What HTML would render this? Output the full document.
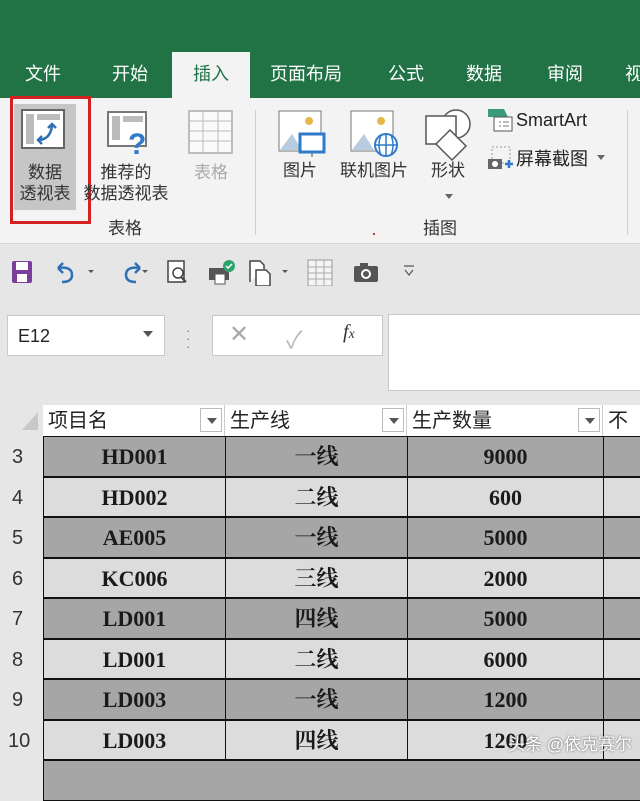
<!DOCTYPE html>
<html><head><meta charset="utf-8"><style>
*{margin:0;padding:0;box-sizing:border-box}
body{width:640px;height:765px;overflow:hidden;background:#e6e6e6;font-family:"Liberation Sans","Noto Sans CJK SC",sans-serif;position:relative;color:#222}
.abs{position:absolute}
.green{left:0;top:0;width:640px;height:98px;background:#217346}
.tab{top:60px;color:#fff;font-size:18px}
.act{left:172px;top:52px;width:78px;height:48px;background:#f3f3f3;color:#217346;font-size:18px;text-align:center;padding-top:8px}
.ribbon{left:0;top:98px;width:640px;height:146px;background:#f3f3f3;border-bottom:1px solid #d6d6d6}
.lbl{font-size:17px;color:#333;text-align:center;line-height:21px}
.sep{width:1px;background:#cfcfcf;top:110px;height:125px}
.box{background:#fff;border:1px solid #c9c9c9}
.hdr{top:405px;height:31px;background:#fff;border-right:1px solid #ccc;font-size:20px;padding-left:5px;line-height:33px}
.dd{position:absolute;right:2px;top:3px;width:22px;height:24px;border:1px solid #bbb;background:#fff}
.dd:after{content:"";position:absolute;left:6px;top:9px;border-left:5px solid transparent;border-right:5px solid transparent;border-top:6px solid #555}
.row{left:43px;width:597px;height:40.5px}
.c{position:absolute;top:0;height:100%;border:1.5px solid #111;font-family:"Liberation Serif","Noto Serif CJK SC",serif;font-weight:bold;font-size:22px;text-align:center;line-height:40px;color:#1a1a1a}
.rn{left:0;width:43px;font-size:20px;color:#333;padding-left:12px}
</style></head><body>
<div class="abs green"></div>
<div class="abs tab" style="left:25px">文件</div>
<div class="abs tab" style="left:112px">开始</div>
<div class="abs act">插入</div>
<div class="abs tab" style="left:270px">页面布局</div>
<div class="abs tab" style="left:388px">公式</div>
<div class="abs tab" style="left:466px">数据</div>
<div class="abs tab" style="left:547px">审阅</div>
<div class="abs tab" style="left:625px">视</div>
<div class="abs ribbon"></div>
<div class="abs" style="left:14px;top:104px;width:62px;height:106px;background:#c6c6c6"></div>
<div class="abs" style="left:10px;top:96px;width:81px;height:128px;border:3px solid #d42020"></div>
<svg class="abs" style="left:20px;top:108px" width="46" height="42"><rect x="2" y="2" width="42" height="38" fill="#fff" stroke="#666" stroke-width="2"/><rect x="6" y="6" width="8" height="30" fill="#bbb"/><rect x="17" y="6" width="23" height="6" fill="#bbb"/><path d="M18 32 Q30 32 32 18 M28 20 l4-4 4 4 M22 28 l-4 4 4 4" stroke="#2f6fb5" stroke-width="2.5" fill="none"/></svg>
<div class="abs lbl" style="left:12px;top:162px;width:66px">数据<br>透视表</div>
<svg class="abs" style="left:106px;top:110px" width="46" height="48"><rect x="2" y="2" width="38" height="34" fill="#fff" stroke="#777" stroke-width="2"/><rect x="6" y="6" width="8" height="24" fill="#bbb"/><rect x="17" y="6" width="20" height="6" fill="#bbb"/><text x="22" y="44" font-size="30" font-weight="bold" fill="#2f7ac9" font-family="Liberation Sans">?</text></svg>
<div class="abs lbl" style="left:78px;top:162px;width:96px">推荐的<br>数据透视表</div>
<svg class="abs" style="left:188px;top:110px" width="46" height="44"><rect x="1" y="1" width="43" height="42" fill="#fafafa" stroke="#aaa" stroke-width="1.5"/><path d="M1 11H44M1 21H44M1 31H44M15 1V43M30 1V43" stroke="#bbb"/></svg>
<div class="abs lbl" style="left:182px;top:162px;width:58px;color:#aaa">表格</div>
<div class="abs lbl" style="left:95px;top:218px;width:60px">表格</div>
<div class="abs sep" style="left:255px"></div>
<div class="abs sep" style="left:627px"></div>
<svg class="abs" style="left:278px;top:110px" width="50" height="48"><rect x="1" y="1" width="42" height="40" fill="#fff" stroke="#777"/><circle cx="31" cy="11" r="4" fill="#e6b84a"/><path d="M2 40 L14 24 L24 40Z" fill="#b9cde0"/><rect x="22" y="24" width="24" height="18" fill="#fff" stroke="#2f7ac9" stroke-width="3"/><path d="M34 43v4" stroke="#555"/></svg>
<div class="abs lbl" style="left:278px;top:160px;width:44px">图片</div>
<svg class="abs" style="left:350px;top:110px" width="50" height="48"><rect x="1" y="1" width="42" height="40" fill="#fff" stroke="#777"/><circle cx="31" cy="11" r="4" fill="#e6b84a"/><path d="M2 40 L14 24 L24 40Z" fill="#b9cde0"/><circle cx="36" cy="35" r="11" fill="#fff" stroke="#2f7ac9" stroke-width="2"/><path d="M25 35H47M36 24V46M31 25Q27 35 31 45M41 25Q45 35 41 45" stroke="#2f7ac9" stroke-width="1.5" fill="none"/></svg>
<div class="abs lbl" style="left:334px;top:160px;width:80px">联机图片</div>
<svg class="abs" style="left:424px;top:108px" width="48" height="54"><circle cx="32" cy="16" r="14" fill="#fff" stroke="#555" stroke-width="1.5"/><rect x="2" y="8" width="30" height="28" fill="#fff" stroke="#555" stroke-width="1.5"/><path d="M26 22L42 38 28 52 12 36Z" fill="#fff" stroke="#555" stroke-width="1.5"/></svg>
<div class="abs lbl" style="left:426px;top:160px;width:44px">形状</div>
<div class="abs" style="left:445px;top:194px;border-left:4px solid transparent;border-right:4px solid transparent;border-top:5px solid #666"></div>
<svg class="abs" style="left:486px;top:107px" width="28" height="26"><path d="M2 2H18L22 10H2Z" fill="#3b9a7a"/><rect x="8" y="10" width="18" height="14" fill="#fff" stroke="#555"/><path d="M13 15h2M13 19h2M17 15h6M17 19h6" stroke="#777"/></svg>
<div class="abs" style="left:516px;top:110px;font-size:18px;color:#222">SmartArt</div>
<svg class="abs" style="left:486px;top:145px" width="28" height="26"><rect x="6" y="2" width="18" height="16" fill="none" stroke="#999" stroke-dasharray="2 2"/><rect x="2" y="14" width="14" height="10" fill="#666"/><circle cx="9" cy="19" r="3" fill="#fff"/><path d="M19 19h8M23 15v8" stroke="#2f7ac9" stroke-width="2.5"/></svg>
<div class="abs" style="left:516px;top:145px;font-size:18px;color:#222">屏幕截图</div>
<div class="abs" style="left:597px;top:155px;border-left:4px solid transparent;border-right:4px solid transparent;border-top:5px solid #666"></div>
<div class="abs lbl" style="left:410px;top:218px;width:60px">插图</div>
<div class="abs" style="left:373px;top:233px;width:2px;height:2px;background:#d33"></div>
<!-- quick access -->
<svg class="abs" style="left:10px;top:258px" width="420" height="28">
<rect x="2" y="3" width="20" height="22" rx="2" fill="#7a3e9d"/><rect x="6" y="4" width="12" height="8" fill="#fff"/><rect x="7" y="16" width="10" height="8" fill="#fff"/>
<path d="M48 10 Q62 8 62 17 Q62 24 52 24 M48 10 l5-5 M48 10 l5 5" stroke="#2f6fb5" stroke-width="2.5" fill="none"/><path d="M78 12l3 3 3-3Z" fill="#555"/>
<path d="M130 10 Q116 8 116 17 Q116 24 126 24 M130 10 l-5-5 M130 10 l-5 5" stroke="#2f6fb5" stroke-width="2.5" fill="none"/><path d="M132 12l3 3 3-3Z" fill="#555"/>
<rect x="158" y="3" width="16" height="21" fill="#fff" stroke="#444" stroke-width="1.5"/><circle cx="168" cy="15" r="5" fill="none" stroke="#444" stroke-width="1.5"/><path d="M171 19l5 5" stroke="#444" stroke-width="2"/>
<rect x="199" y="10" width="20" height="12" fill="#555"/><rect x="205" y="16" width="10" height="10" fill="#fff" stroke="#555"/><circle cx="219" cy="8" r="6" fill="#2fa36b"/><path d="M216 8l2 2 4-4" stroke="#fff" stroke-width="1.5" fill="none"/>
<path d="M240 24V3h10l4 4v4M246 12h10l4 4v12h-14Z" fill="#fff" stroke="#444" stroke-width="1.5"/><path d="M272 12l3 3 3-3Z" fill="#555"/>
<rect x="298" y="2" width="24" height="26" fill="#f4f4f4" stroke="#999"/><path d="M298 9h24M298 15h24M298 21h24M306 2v26M314 2v26" stroke="#aaa"/>
<rect x="344" y="8" width="24" height="16" rx="2" fill="#555"/><rect x="350" y="5" width="8" height="4" fill="#555"/><circle cx="356" cy="16" r="5" fill="#fff"/><circle cx="356" cy="16" r="3" fill="#555"/>
<path d="M394 8h10M395 12l4 5 4-5" stroke="#555" stroke-width="1.2" fill="none"/>
</svg>
<!-- formula bar -->
<div class="abs box" style="left:7px;top:315px;width:158px;height:41px;font-size:18px;padding:10px 0 0 10px">E12</div>
<div class="abs" style="left:143px;top:331px;border-left:5px solid transparent;border-right:5px solid transparent;border-top:6px solid #555"></div>
<div class="abs" style="left:186px;top:326px;color:#888;font-size:14px;line-height:8px">·<br>·<br>·</div>
<div class="abs box" style="left:212px;top:315px;width:171px;height:41px"></div>
<div class="abs" style="left:229px;top:320px;font-size:24px;color:#aaa">✕</div>
<div class="abs" style="left:286px;top:320px;font-size:24px;color:#bbb">✓</div>
<div class="abs" style="left:343px;top:321px;font-size:20px;font-style:italic;font-family:'Liberation Serif',serif;color:#333">f<span style="font-size:14px">x</span></div>
<div class="abs box" style="left:388px;top:314px;width:260px;height:77px"></div>
<!-- headers -->
<svg class="abs" style="left:20px;top:410px" width="20" height="22"><path d="M18 2V20H2Z" fill="#c8c8c8"/></svg>
<div class="abs hdr" style="left:43px;width:182px">项目名<div class="dd"></div></div>
<div class="abs hdr" style="left:225px;width:182px">生产线<div class="dd"></div></div>
<div class="abs hdr" style="left:407px;width:196px">生产数量<div class="dd"></div></div>
<div class="abs hdr" style="left:603px;width:40px">不良</div>
<div class="abs" style="left:43px;top:436px;width:597px;height:330px">
</div>
<div id="rows"></div>
<div class="abs" style="left:0;top:436px;width:43px;height:330px;background:#e6e6e6"></div>
<div class="abs rn" style="top:446px">3</div><div class="abs rn" style="top:487px">4</div><div class="abs rn" style="top:527px">5</div><div class="abs rn" style="top:568px">6</div><div class="abs rn" style="top:608px">7</div><div class="abs rn" style="top:649px">8</div><div class="abs rn" style="top:689px">9</div><div class="abs rn" style="top:730px;padding-left:8px">10</div>

<div class="abs row" style="top:436px"><div class="c" style="left:0;width:183px;background:#a6a6a6">HD001</div><div class="c" style="left:182px;width:183px;background:#a6a6a6">一线</div><div class="c" style="left:364px;width:197px;background:#a6a6a6">9000</div><div class="c" style="left:560px;width:40px;background:#a6a6a6"></div></div>
<div class="abs row" style="top:476.5px"><div class="c" style="left:0;width:183px;background:#dcdcdc">HD002</div><div class="c" style="left:182px;width:183px;background:#dcdcdc">二线</div><div class="c" style="left:364px;width:197px;background:#dcdcdc">600</div><div class="c" style="left:560px;width:40px;background:#dcdcdc"></div></div>
<div class="abs row" style="top:517px"><div class="c" style="left:0;width:183px;background:#a6a6a6">AE005</div><div class="c" style="left:182px;width:183px;background:#a6a6a6">一线</div><div class="c" style="left:364px;width:197px;background:#a6a6a6">5000</div><div class="c" style="left:560px;width:40px;background:#a6a6a6"></div></div>
<div class="abs row" style="top:557.5px"><div class="c" style="left:0;width:183px;background:#dcdcdc">KC006</div><div class="c" style="left:182px;width:183px;background:#dcdcdc">三线</div><div class="c" style="left:364px;width:197px;background:#dcdcdc">2000</div><div class="c" style="left:560px;width:40px;background:#dcdcdc"></div></div>
<div class="abs row" style="top:598px"><div class="c" style="left:0;width:183px;background:#a6a6a6">LD001</div><div class="c" style="left:182px;width:183px;background:#a6a6a6">四线</div><div class="c" style="left:364px;width:197px;background:#a6a6a6">5000</div><div class="c" style="left:560px;width:40px;background:#a6a6a6"></div></div>
<div class="abs row" style="top:638.5px"><div class="c" style="left:0;width:183px;background:#dcdcdc">LD001</div><div class="c" style="left:182px;width:183px;background:#dcdcdc">二线</div><div class="c" style="left:364px;width:197px;background:#dcdcdc">6000</div><div class="c" style="left:560px;width:40px;background:#dcdcdc"></div></div>
<div class="abs row" style="top:679px"><div class="c" style="left:0;width:183px;background:#a6a6a6">LD003</div><div class="c" style="left:182px;width:183px;background:#a6a6a6">一线</div><div class="c" style="left:364px;width:197px;background:#a6a6a6">1200</div><div class="c" style="left:560px;width:40px;background:#a6a6a6"></div></div>
<div class="abs row" style="top:719.5px"><div class="c" style="left:0;width:183px;background:#dcdcdc">LD003</div><div class="c" style="left:182px;width:183px;background:#dcdcdc">四线</div><div class="c" style="left:364px;width:197px;background:#dcdcdc">1200</div><div class="c" style="left:560px;width:40px;background:#dcdcdc"></div></div>
<div class="abs row" style="top:760px"><div class="c" style="left:0;width:600px;background:#a6a6a6"></div></div>
<div class="abs" style="left:508px;top:730px;font-size:17px;color:#fff;text-shadow:0 0 2px #555">头条 @依克赛尔</div>
</body></html>
